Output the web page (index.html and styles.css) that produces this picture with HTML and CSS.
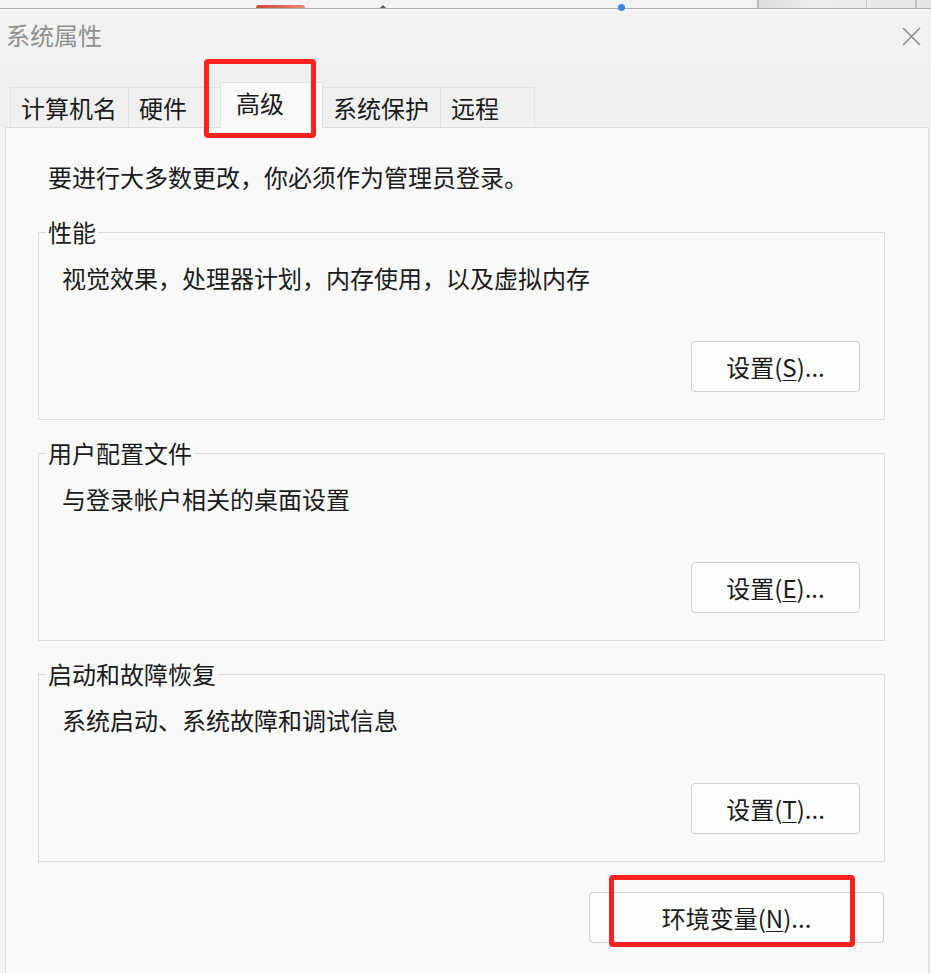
FILE: index.html
```html
<!DOCTYPE html>
<html lang="zh-CN">
<head>
<meta charset="utf-8">
<title>系统属性</title>
<link rel="stylesheet" href="styles.css">
</head>
<body>
<div class="screen">
  <div class="backdrop">
    <span class="bd-blob"></span>
    <span class="bd-tri"></span>
    <span class="bd-dot"></span>
    <span class="bd-win"><i class="bd-sep bd-sep1"></i><i class="bd-sep bd-sep2"></i></span>
  </div>
  <div class="dialog">
    <div class="titlebar">
      <span class="title">系统属性</span>
      <svg class="close" width="19" height="19" viewBox="0 0 19 19" aria-hidden="true">
        <path d="M1 1 L18 18 M18 1 L1 18" stroke="#8c8c8c" stroke-width="1.6" fill="none"/>
      </svg>
    </div>
    <div class="tabbar">
      <div class="tab tab-wide">计算机名</div>
      <div class="tab">硬件</div>
      <div class="tab tab-active">高级</div>
      <div class="tab tab-wide">系统保护</div>
      <div class="tab tab-last">远程</div>
    </div>
    <div class="panel">
      <p class="note">要进行大多数更改，你必须作为管理员登录。</p>
      <fieldset class="group">
        <legend>性能</legend>
        <p class="desc">视觉效果，处理器计划，内存使用，以及虚拟内存</p>
        <div class="actions"><button class="btn">设置(<u>S</u>)...</button></div>
      </fieldset>
      <fieldset class="group">
        <legend>用户配置文件</legend>
        <p class="desc">与登录帐户相关的桌面设置</p>
        <div class="actions"><button class="btn">设置(<u>E</u>)...</button></div>
      </fieldset>
      <fieldset class="group">
        <legend>启动和故障恢复</legend>
        <p class="desc">系统启动、系统故障和调试信息</p>
        <div class="actions"><button class="btn">设置(<u>T</u>)...</button></div>
      </fieldset>
      <div class="footer"><button class="btn btn-wide">环境变量(<u>N</u>)...</button></div>
    </div>
  </div>
  <div class="mark mark-tab"></div>
  <div class="mark mark-env"></div>
</div>
</body>
</html>
```
FILE: styles.css
```css
* { box-sizing: border-box; }
html, body { margin: 0; padding: 0; }
body {
  font-family: "Noto Sans CJK SC", "Noto Sans", sans-serif;
  color: #1a1a1a;
  background: #f0f0f0;
}
.screen {
  position: relative;
  width: 931px;
  height: 973px;
  overflow: hidden;
  background: #f0f0f0;
}

/* background strip behind dialog */
.backdrop {
  position: relative;
  height: 9px;
  background: #f3f3f3;
  border-bottom: 1px solid #aeaeae;
}
.bd-blob {
  position: absolute;
  left: 256px; top: 5px;
  width: 49px; height: 3px;
  border-radius: 24px 24px 0 0;
  background: linear-gradient(90deg, #d2463a, #e68a6c);
}
.bd-tri {
  position: absolute;
  left: 380px; top: 5px;
  width: 0; height: 0;
  border-left: 3px solid transparent;
  border-right: 3px solid transparent;
  border-bottom: 3px solid #555;
}
.bd-dot {
  position: absolute;
  left: 618px; top: 4px;
  width: 7px; height: 7px;
  border-radius: 50%;
  background: #3c86e2;
}
.bd-win {
  position: absolute;
  left: 757px; top: 0;
  width: 174px; height: 8px;
  background: linear-gradient(90deg, #dcdcdc, #ececec 30%, #e6e6e6);
  border-left: 2px solid #bdbdbd;
}
.bd-sep {
  position: absolute;
  top: 0; height: 8px;
  width: 1px;
  background: #c8c8c8;
}
.bd-sep1 { left: 107px; }
.bd-sep2 { left: 156px; width: 2px; background: #c0c0c0; }

/* dialog */
.dialog {
  background: #f2f2f2;
}
.titlebar {
  height: 56px;
  display: flex;
  align-items: center;
  justify-content: space-between;
  padding: 0 10px 4px 6px;
}
.title {
  font-size: 24px;
  line-height: 24px;
  color: #8f8f8f;
}
.close { display: block; margin-top: 3px; }

.tabbar {
  position: relative;
  z-index: 1;
  height: 62px;
  background: #efefef;
  display: flex;
  align-items: flex-end;
  padding-left: 10px;
}
.tab {
  height: 40px;
  min-width: 93px;
  padding: 8px 11px 0 10px;
  font-size: 24px;
  line-height: 24px;
  color: #1a1a1a;
  background: #f0f0f0;
  border: 1px solid #e2e2e2;
  border-bottom: none;
  margin-right: -1px;
}
.tab-wide { min-width: 119px; }
.tab-last { min-width: 95px; }
.tab-active {
  position: relative;
  height: 46px;
  min-width: 103px;
  margin-bottom: -1px;
  padding-left: 15px;
  background: #f9f9f9;
  border-color: #e0e0e0;
}

.panel {
  margin: 0 2px 0 5px;
  min-height: 900px;
  background: #f9f9f9;
  border: 1px solid #dcdcdc;
  padding: 37px 43px 0 32px;
}
.note {
  margin: 0 0 31px 10px;
  font-size: 24px;
  line-height: 24px;
}
.group {
  margin: 0 0 21px 0;
  padding: 0 0 27px 0;
  border: 1px solid #dcdcdc;
  min-width: 0;
}
.group legend {
  margin-left: 7px;
  padding: 0 2px;
  font-size: 24px;
  line-height: 24px;
  color: #1a1a1a;
}
.desc {
  margin: 22px 0 0 0;
  padding-left: 23px;
  font-size: 24px;
  line-height: 24px;
}
.actions {
  display: flex;
  justify-content: flex-end;
  padding-right: 24px;
  margin-top: 51px;
}
.btn {
  width: 169px;
  height: 51px;
  padding: 0;
  font-family: "Noto Sans CJK SC", "Noto Sans", sans-serif;
  font-size: 24px;
  line-height: 24px;
  color: #1a1a1a;
  background: #fdfdfd;
  border: 1px solid #cfcfcf;
  border-radius: 4px;
}
.btn u { text-underline-offset: 3px; text-decoration-thickness: 1px; }
.btn-wide { width: 295px; }
.footer {
  display: flex;
  justify-content: flex-end;
  padding-right: 1px;
  margin-top: 30px;
}

/* red annotation boxes */
.mark {
  position: absolute;
  border: 5px solid #fe2121;
  border-radius: 4px;
  z-index: 5;
}
.mark-tab { left: 204px; top: 59px; width: 112px; height: 79px; }
.mark-env { left: 609px; top: 875px; width: 246px; height: 72px; }
```
